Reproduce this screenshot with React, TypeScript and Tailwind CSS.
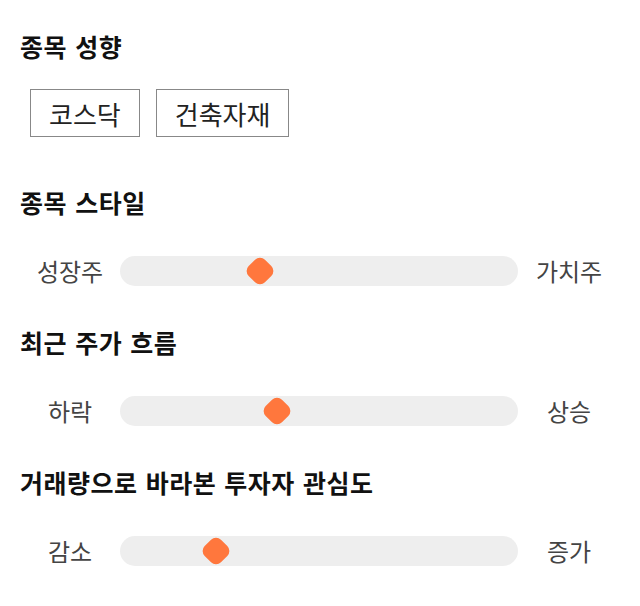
import { useState } from "react";

const font = "font-['Noto_Sans_CJK_KR','Noto_Sans',sans-serif]";

type SliderProps = {
  left: string;
  right: string;
  pos: number; // thumb centre, px from track start
  className?: string;
};

function Slider({ left, right, pos, className = "" }: SliderProps) {
  return (
    <div className={`flex items-center h-[30px] ${className}`}>
      <span className="w-[100px] text-center text-[24px] text-[#444] leading-none">{left}</span>
      <div className="relative flex-1 h-[30px] rounded-full bg-[#eeeeee]">
        <div
          className="absolute top-1/2 w-[23px] h-[23px] -translate-x-1/2 -translate-y-1/2 rotate-45 rounded-[7px] bg-[#ff773d]"
          style={{ left: pos }}
        />
      </div>
      <span className="w-[102px] text-center text-[24px] text-[#444] leading-none">{right}</span>
    </div>
  );
}

function Heading({ children, className = "" }: { children: string; className?: string }) {
  return (
    <h2
      className={`text-[25px] font-bold leading-[32px] tracking-[0.5px] [word-spacing:2px] text-[#111] ${className}`}
    >
      {children}
    </h2>
  );
}

export default function App() {
  const [tags] = useState(["코스닥", "건축자재"]);

  return (
    <div className={`min-h-screen bg-white px-5 pt-[30px] ${font}`}>
      <Heading>종목 성향</Heading>
      <div className="mt-[27px] ml-[10px] flex gap-4">
        {tags.map((t) => (
          <div
            key={t}
            className="h-[48px] px-[18px] flex items-center border border-[#888] text-[26px] text-[#222]"
          >
            {t}
          </div>
        ))}
      </div>

      <Heading className="mt-[49px]">종목 스타일</Heading>
      <Slider className="mt-[38px]" left="성장주" right="가치주" pos={140} />

      <Heading className="mt-[40px]">최근 주가 흐름</Heading>
      <Slider className="mt-[38px]" left="하락" right="상승" pos={157} />

      <Heading className="mt-[40px]">거래량으로 바라본 투자자 관심도</Heading>
      <Slider className="mt-[38px]" left="감소" right="증가" pos={96} />
    </div>
  );
}
